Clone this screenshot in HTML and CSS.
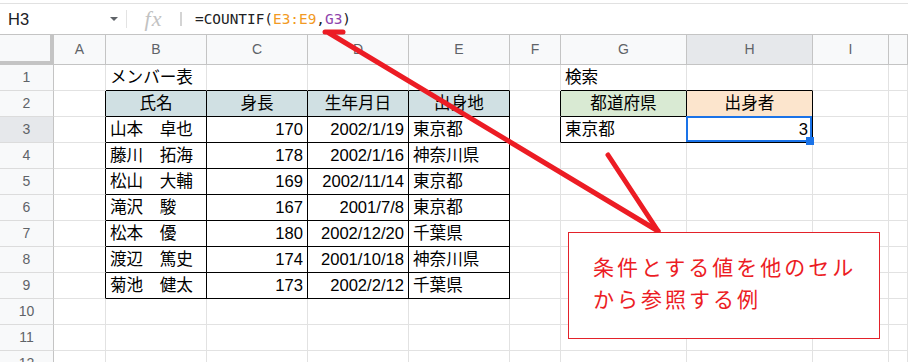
FILE: index.html
```html
<!DOCTYPE html>
<html lang="ja">
<head>
<meta charset="utf-8">
<link rel="stylesheet" href="styles.css">
</head>
<body>
<div class="page">
  <div class="fbar">
    <div class="namebox"><span class="nm">H3</span><span class="caret"></span></div>
    <div class="sep1"></div>
    <div class="fx">fx</div>
    <div class="sep2"></div>
    <div class="formula">=COUNTIF(<span class="ref1">E3:E9</span>,<span class="ref2">G3</span>)</div>
  </div>
  <div class="sheet">
    <div class="corner"></div><div class="ch">A</div><div class="ch">B</div><div class="ch">C</div><div class="ch">D</div><div class="ch">E</div><div class="ch">F</div><div class="ch">G</div><div class="ch ch-sel">H</div><div class="ch">I</div><div class="ch"></div>

    <div class="rh">1</div><div class="c"></div><div class="c bb ovf">メンバー表</div><div class="c bb"></div><div class="c bb"></div><div class="c bb"></div><div class="c"></div><div class="c bb">検索</div><div class="c bb"></div><div class="c"></div><div class="c"></div>

    <div class="rh">2</div><div class="c br"></div><div class="c t ctr fill-b">氏名</div><div class="c t ctr fill-b">身長</div><div class="c t ctr fill-b">生年月日</div><div class="c t ctr fill-b">出身地</div><div class="c br"></div><div class="c t ctr fill-g">都道府県</div><div class="c t ctr fill-o">出身者</div><div class="c"></div><div class="c"></div>

    <div class="rh rh-sel">3</div><div class="c br"></div><div class="c t">山本　卓也</div><div class="c t num">170</div><div class="c t num">2002/1/19</div><div class="c t">東京都</div><div class="c br"></div><div class="c t">東京都</div><div class="c t num sel">3<span class="handle"></span></div><div class="c"></div><div class="c"></div>

    <div class="rh">4</div><div class="c br"></div><div class="c t">藤川　拓海</div><div class="c t num">178</div><div class="c t num">2002/1/16</div><div class="c t">神奈川県</div><div class="c"></div><div class="c"></div><div class="c"></div><div class="c"></div><div class="c"></div>

    <div class="rh">5</div><div class="c br"></div><div class="c t">松山　大輔</div><div class="c t num">169</div><div class="c t num">2002/11/14</div><div class="c t">東京都</div><div class="c"></div><div class="c"></div><div class="c"></div><div class="c"></div><div class="c"></div>

    <div class="rh">6</div><div class="c br"></div><div class="c t">滝沢　駿</div><div class="c t num">167</div><div class="c t num">2001/7/8</div><div class="c t">東京都</div><div class="c"></div><div class="c"></div><div class="c"></div><div class="c"></div><div class="c"></div>

    <div class="rh">7</div><div class="c br"></div><div class="c t">松本　優</div><div class="c t num">180</div><div class="c t num">2002/12/20</div><div class="c t">千葉県</div><div class="c"></div><div class="c"></div><div class="c"></div><div class="c"></div><div class="c"></div>

    <div class="rh">8</div><div class="c br"></div><div class="c t">渡辺　篤史</div><div class="c t num">174</div><div class="c t num">2001/10/18</div><div class="c t">神奈川県</div><div class="c"></div><div class="c"></div><div class="c"></div><div class="c"></div><div class="c"></div>

    <div class="rh">9</div><div class="c br"></div><div class="c t">菊池　健太</div><div class="c t num">173</div><div class="c t num">2002/2/12</div><div class="c t">千葉県</div><div class="c"></div><div class="c"></div><div class="c"></div><div class="c"></div><div class="c"></div>

    <div class="rh">10</div><div class="c"></div><div class="c"></div><div class="c"></div><div class="c"></div><div class="c"></div><div class="c"></div><div class="c"></div><div class="c"></div><div class="c"></div><div class="c"></div>

    <div class="rh">11</div><div class="c"></div><div class="c"></div><div class="c"></div><div class="c"></div><div class="c"></div><div class="c"></div><div class="c"></div><div class="c"></div><div class="c"></div><div class="c"></div>

    <div class="rh">12</div><div class="c"></div><div class="c"></div><div class="c"></div><div class="c"></div><div class="c"></div><div class="c"></div><div class="c"></div><div class="c"></div><div class="c"></div><div class="c"></div>
  </div>

  <svg class="arrows" width="908" height="362" viewBox="0 0 908 362">
    <line x1="325" y1="32" x2="343" y2="32" />
    <line x1="329" y1="33" x2="658" y2="231" />
    <line x1="608" y1="155" x2="658" y2="231" />
  </svg>

  <div class="callout">条件とする値を他のセル<br>から参照する例</div>
</div>
</body>
</html>
```

FILE: styles.css
```css
* { box-sizing: border-box; }
html, body { margin: 0; padding: 0; background: #fff; }
body { width: 908px; height: 362px; overflow: hidden; }

.page {
  position: relative;
  width: 908px;
  height: 362px;
  overflow: hidden;
  font-family: "Liberation Sans", "Noto Sans CJK JP", sans-serif;
}

/* formula bar */
.fbar {
  margin-top: 3px;
  height: 31px;
  border-top: 1px solid #e1e1e1;
  display: flex;
  align-items: center;
  color: #202124;
}
.namebox {
  width: 126px;
  display: flex;
  align-items: center;
  padding-left: 8px;
}
.nm { font-size: 16.5px; flex: 1; }
.caret {
  width: 0; height: 0;
  border-left: 4px solid transparent;
  border-right: 4px solid transparent;
  border-top: 4px solid #5f6368;
  margin-right: 8px;
}
.sep1 { width: 1px; height: 18px; background: #e3e3e3; }
.fx {
  width: 53px;
  text-align: center;
  font-family: "Liberation Serif", serif;
  font-style: italic;
  font-size: 22px;
  color: #c2c2c2;
  letter-spacing: 1px;
}
.sep2 { width: 2px; height: 14px; background: #d4d4d4; }
.formula {
  padding-left: 13px;
  font-family: "DejaVu Sans Mono", "Liberation Mono", monospace;
  font-size: 14.4px;
  color: #202124;
}
.ref1 { color: #f29a23; }
.ref2 { color: #8e44ad; }

/* sheet grid */
.sheet {
  display: grid;
  grid-template-columns: 54px 52px 101px 101px 101px 101px 51px 126px 126px 76px 1fr;
  grid-template-rows: 30px repeat(12, 26px);
  border-top: 1px solid #c4c4c4;
}
.corner {
  background: #f8f9fa;
  border-right: 4px solid #c4c4c4;
  border-bottom: 4px solid #c4c4c4;
}
.ch {
  background: #f8f9fa;
  border-right: 1px solid #c4c4c4;
  border-bottom: 1px solid #c4c4c4;
  text-align: center;
  font-family: "Liberation Sans", sans-serif;
  font-size: 14px;
  line-height: 29px;
  color: #5f6368;
}
.ch-sel { background: #e6e8eb; }
.rh {
  background: #f8f9fa;
  border-right: 1px solid #c4c4c4;
  border-bottom: 1px solid #dcdcdc;
  text-align: center;
  font-family: "Liberation Sans", sans-serif;
  font-size: 14px;
  line-height: 25px;
  color: #5f6368;
}
.rh-sel { background: #e6e8eb; }

.c {
  border-right: 1px solid #e2e2e2;
  border-bottom: 1px solid #e2e2e2;
  font-size: 16.6px;
  line-height: 25px;
  padding: 0 4px;
  white-space: nowrap;
  color: #000;
}
.ovf { overflow: visible; }
.br { border-right-color: #000; }
.bb { border-bottom-color: #000; }
.t { border-right-color: #000; border-bottom-color: #000; overflow: hidden; }
.ctr { text-align: center; }
.num { text-align: right; }
.fill-b { background: #d0e0e3; }
.fill-g { background: #d9ead3; }
.fill-o { background: #fce5cd; }

.sel { position: relative; overflow: visible; }
.sel::after {
  content: "";
  position: absolute;
  left: -1px; top: -1px; right: 0; bottom: 0;
  border: 2px solid #1a73e8;
}
.handle {
  position: absolute;
  right: -2px;
  bottom: -3px;
  width: 8px;
  height: 8px;
  background: #1a73e8;
  z-index: 2;
}

/* annotations */
.arrows {
  position: absolute;
  left: 0; top: 0;
  pointer-events: none;
  z-index: 5;
}
.arrows line {
  stroke: #ec1c24;
  stroke-width: 5;
  stroke-linecap: round;
}
.callout {
  position: absolute;
  left: 568px;
  top: 232px;
  width: 312px;
  height: 107px;
  background: #fff;
  border: 1px solid #e3222a;
  z-index: 6;
  color: #ec1c24;
  font-family: "Noto Sans CJK JP", sans-serif;
  font-size: 21px;
  letter-spacing: 3px;
  line-height: 32px;
  padding: 17px 0 0 24px;
}
```
